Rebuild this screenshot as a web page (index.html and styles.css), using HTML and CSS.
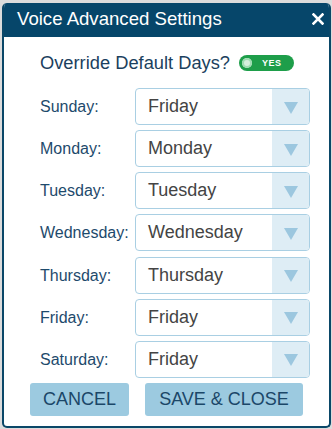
FILE: index.html
```html
<!DOCTYPE html>
<html>
<head>
<meta charset="utf-8">
<link rel="stylesheet" href="styles.css">
</head>
<body>
<div class="dialog">
  <div class="header">
    <span class="title">Voice Advanced Settings</span>
    <svg class="close" width="12" height="12" viewBox="0 0 12 12"><path d="M1.5 1.5 L10.5 10.5 M10.5 1.5 L1.5 10.5" stroke="#fff" stroke-width="2.6" stroke-linecap="square"/></svg>
  </div>
  <div class="body">
    <div class="override">
      <span>Override Default Days?</span>
      <span class="toggle"><span class="knob"></span><span class="yes">YES</span></span>
    </div>
    <div class="grid">
      <label>Sunday:</label><div class="select"><span class="val">Friday</span><span class="arrow"></span></div>
      <label>Monday:</label><div class="select"><span class="val">Monday</span><span class="arrow"></span></div>
      <label>Tuesday:</label><div class="select"><span class="val">Tuesday</span><span class="arrow"></span></div>
      <label>Wednesday:</label><div class="select"><span class="val">Wednesday</span><span class="arrow"></span></div>
      <label>Thursday:</label><div class="select"><span class="val">Thursday</span><span class="arrow"></span></div>
      <label>Friday:</label><div class="select"><span class="val">Friday</span><span class="arrow"></span></div>
      <label>Saturday:</label><div class="select"><span class="val">Friday</span><span class="arrow"></span></div>
    </div>
    <div class="buttons">
      <button class="btn cancel">CANCEL</button>
      <button class="btn save">SAVE &amp; CLOSE</button>
    </div>
  </div>
</div>
</body>
</html>
```
FILE: styles.css
```css
html, body {
  margin: 0;
  padding: 0;
  background: #dcdcdc;
  font-family: "Liberation Sans", Arial, sans-serif;
}
body {
  padding: 3px 1px 1px 2px;
  width: 332px;
  height: 429px;
  box-sizing: border-box;
}
.dialog {
  background: #fff;
  border: 2px solid #0a4768;
  border-top: 0;
  border-radius: 5px;
  overflow: hidden;
  height: 425px;
  box-sizing: border-box;
  display: flex;
  flex-direction: column;
}
.header {
  background: #06466a;
  height: 34px;
  display: flex;
  align-items: center;
  justify-content: space-between;
  padding: 0 5px 0 13px;
  color: #fff;
}
.title {
  font-size: 18.6px;
  margin-top: -2px;
}
.close {
  display: block;
  margin-top: -3px;
}
.body {
  padding: 0 19px 0 36px;
  display: flex;
  flex-direction: column;
}
.override {
  display: flex;
  align-items: center;
  height: 47px;
  font-size: 18.3px;
  color: #1b3f5e;
  gap: 9px;
  padding-top: 4px;
  box-sizing: border-box;
}
.toggle {
  width: 55px;
  height: 16px;
  border-radius: 8px;
  background: #1e9e4a;
  display: flex;
  align-items: center;
  padding-left: 3px;
  box-sizing: border-box;
  gap: 10px;
}
.knob {
  width: 10px;
  height: 10px;
  border-radius: 50%;
  background: #d6f0dd;
  box-shadow: inset 0 0 0 2px #9fdcb2;
}
.yes {
  color: #fff;
  font-size: 9px;
  font-weight: bold;
  letter-spacing: 0.5px;
}
.grid {
  display: grid;
  grid-template-columns: 95px 175px;
  grid-auto-rows: 37px;
  row-gap: 5.17px;
  margin-top: 4px;
}
label {
  display: flex;
  align-items: center;
  font-size: 16px;
  color: #1e4a6c;
  padding-top: 1px;
}
.select {
  border: 1px solid #a9cfe3;
  border-radius: 4px;
  display: flex;
  overflow: hidden;
  box-sizing: border-box;
}
.val {
  flex: 1;
  display: flex;
  align-items: center;
  padding-left: 12px;
  font-size: 18px;
  color: #444;
}
.arrow {
  width: 37px;
  background: #deedf5;
  display: flex;
  align-items: center;
  justify-content: center;
}
.arrow::after {
  content: "";
  width: 0;
  height: 0;
  border-left: 7px solid transparent;
  border-right: 7px solid transparent;
  border-top: 12px solid #9cc7df;
  margin-top: 2px;
}
.buttons {
  display: flex;
  gap: 16px;
  margin-top: 5px;
  margin-left: -10px;
}
.btn {
  height: 33px;
  border: 0;
  border-radius: 3px;
  background: #9ccae0;
  color: #1b4768;
  font-family: "Liberation Sans", Arial, sans-serif;
  font-size: 18px;
  padding: 0;
}
.cancel { width: 99px; }
.save { width: 158px; }
```
